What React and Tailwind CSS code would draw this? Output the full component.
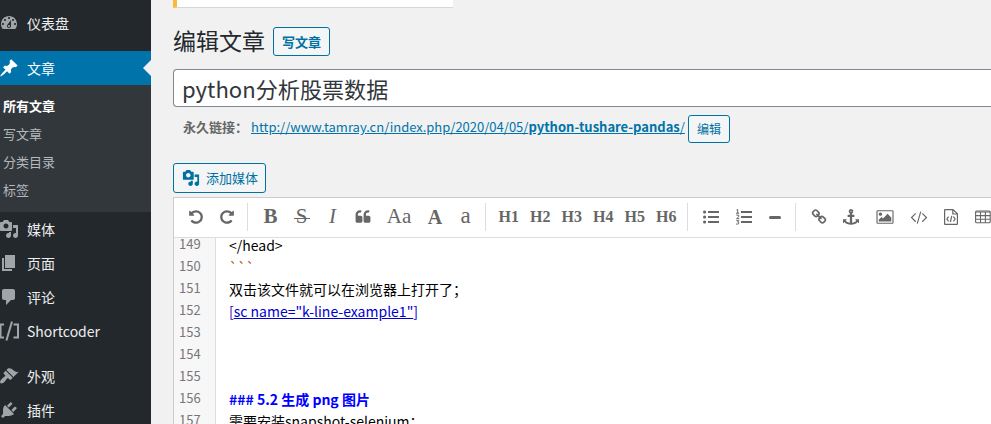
import React from "react";

const PATHS = {
  dashboard:
    "M3.76 16h12.48c1.1-1.37 1.76-3.11 1.76-5 0-4.42-3.58-8-8-8s-8 3.58-8 8c0 1.89.66 3.63 1.76 5zM10 4c.55 0 1 .45 1 1s-.45 1-1 1-1-.45-1-1 .45-1 1-1zM6 6c.55 0 1 .45 1 1s-.45 1-1 1-1-.45-1-1 .45-1 1-1zm8 0c.55 0 1 .45 1 1s-.45 1-1 1-1-.45-1-1 .45-1 1-1zm-5.37 5.55L12 7v6c0 1.1-.9 2-2 2s-2-.9-2-2c0-.57.24-1.08.63-1.45zM4 10c.55 0 1 .45 1 1s-.45 1-1 1-1-.45-1-1 .45-1 1-1zm12 0c.55 0 1 .45 1 1s-.45 1-1 1-1-.45-1-1 .45-1 1-1zm-5 3c0-.55-.45-1-1-1s-1 .45-1 1 .45 1 1 1 1-.45 1-1z",
  post: "M10.44 3.02l1.82-1.82 6.36 6.35-1.83 1.82c-1.05-.68-2.48-.57-3.41.36l-.75.75c-.92.93-1.04 2.35-.35 3.41l-1.83 1.82-2.41-2.41-2.8 2.79c-.42.42-3.38 2.71-3.8 2.29s1.86-3.39 2.28-3.81l2.79-2.79L4.1 9.36l1.83-1.82c1.05.69 2.48.57 3.4-.36l.75-.75c.93-.92 1.05-2.35.36-3.41z",
  media:
    "M13 11V4c0-.55-.45-1-1-1h-1.67L9 1H5L3.67 3H2c-.55 0-1 .45-1 1v7c0 .55.45 1 1 1h10c.55 0 1-.45 1-1zM7 4.5c1.38 0 2.5 1.12 2.5 2.5S8.38 9.5 7 9.5 4.5 8.38 4.5 7 5.62 4.5 7 4.5zM14 6h5v10.5c0 1.38-1.12 2.5-2.5 2.5S14 17.88 14 16.5s1.12-2.5 2.5-2.5c.17 0 .34.02.5.05V9h-3V6zm-4 8.05V13h2v3.5c0 1.38-1.12 2.5-2.5 2.5S7 17.88 7 16.5 8.12 14 9.5 14c.17 0 .34.02.5.05z",
  page: "M6 15V2h10v13H6zm-1 1h8v2H3V5h2v11z",
  comments:
    "M5 2h9c1.1 0 2 .9 2 2v7c0 1.1-.9 2-2 2h-2l-5 5v-5H5c-1.1 0-2-.9-2-2V4c0-1.1.9-2 2-2z",
  appearance:
    "M14.48 11.06L7.41 3.99l1.5-1.5c.5-.56 2.3-.47 3.51.32 1.21.8 1.43 1.28 2.91 2.1 1.18.64 2.45 1.26 4.45.85zm-.71.71L6.7 4.7 4.93 6.47c-.39.39-.39 1.02 0 1.41l1.06 1.06c.39.39.39 1.03 0 1.42-.6.6-1.43 1.11-2.21 1.69-.35.26-.7.53-1.01.84C1.43 14.23.4 16.08 1.4 17.07c.99 1 2.84-.03 4.18-1.36.31-.31.58-.66.85-1.02.57-.78 1.08-1.61 1.69-2.21.39-.39 1.02-.39 1.41 0l1.06 1.06c.39.39 1.02.39 1.41 0z",
  plugins:
    "M13.11 4.36L9.87 7.6 8 5.73l3.24-3.24c.35-.34 1.05-.2 1.56.32.52.51.66 1.21.31 1.55zm-8 1.77l.91-1.12 9.01 9.01-1.19.84c-.71.71-2.63 1.16-3.82 1.16H6.14L4.9 17.26c-.59.59-1.54.59-2.12 0-.59-.58-.59-1.53 0-2.12l1.24-1.24v-3.88c0-1.13.4-3.19 1.09-3.89zm7.26 3.97l3.24-3.24c.34-.35 1.04-.21 1.55.31.52.51.66 1.21.31 1.55l-3.24 3.25z",
  undo: "M1664 896q0 156-61 298t-164 245-245 164-298 61q-172 0-327-72.5t-264-204.5q-7-10-6.5-22.5t8.5-20.5l137-138q10-9 25-9 16 2 23 12 73 95 179 147t225 52q104 0 198.5-40.5t163.5-109.5 109.5-163.5 40.5-198.5-40.5-198.5-109.5-163.5-163.5-109.5-198.5-40.5q-98 0-188 35.5t-160 101.5l137 138q31 30 14 69-17 40-59 40h-448q-26 0-45-19t-19-45v-448q0-42 40-59 39-17 69 14l130 129q107-101 244.5-156.5t284.5-55.5q156 0 298 61t245 164 164 245 61 298z",
  quote:
    "M832 960v384q0 80-56 136t-136 56h-384q-80 0-136-56t-56-136v-704q0-104 40.5-198.5t109.5-163.5 163.5-109.5 198.5-40.5h64q26 0 45 19t19 45v128q0 26-19 45t-45 19h-64q-106 0-181 75t-75 181v32q0 40 28 68t68 28h224q80 0 136 56t56 136zm896 0v384q0 80-56 136t-136 56h-384q-80 0-136-56t-56-136v-704q0-104 40.5-198.5t109.5-163.5 163.5-109.5 198.5-40.5h64q26 0 45 19t19 45v128q0 26-19 45t-45 19h-64q-106 0-181 75t-75 181v32q0 40 28 68t68 28h224q80 0 136 56t56 136z",
  link: "M1520 1216q0-40-28-68l-208-208q-28-28-68-28-42 0-72 32 3 3 19 18.5t21.5 21.5 15 19 13 25.5 3.5 27.5q0 40-28 68t-68 28q-15 0-27.5-3.5t-25.5-13-19-15-21.5-21.5-18.5-19q-33 31-33 73 0 40 28 68l206 207q27 27 68 27 40 0 68-26l147-146q28-28 28-67zm-703-705q0-40-28-68l-206-207q-28-28-68-28-39 0-68 27l-147 146q-28 28-28 67 0 40 28 68l208 208q27 27 68 27 42 0 72-31-3-3-19-18.5t-21.5-21.5-15-19-13-25.5-3.5-27.5q0-40 28-68t68-28q15 0 27.5 3.5t25.5 13 19 15 21.5 21.5 18.5 19q33-31 33-73zm895 705q0 120-85 203l-147 146q-83 83-203 83-121 0-204-85l-206-207q-83-83-83-203 0-123 88-209l-88-88q-86 88-208 88-120 0-204-84l-208-208q-84-84-84-204t85-203l147-146q83-83 203-83 121 0 204 85l206 207q83 83 83 203 0 123-88 209l88 88q86-88 208-88 120 0 204 84l208 208q84 84 84 204z",
  anchor:
    "M960 256q0-26-19-45t-45-19-45 19-19 45 19 45 45 19 45-19 19-45zm832 928v352q0 22-20 30-8 2-12 2-12 0-23-9l-93-93q-119 143-318.5 226.5t-429.5 83.5-429.5-83.5-318.5-226.5l-93 93q-9 9-23 9-4 0-12-2-20-8-20-30v-352q0-14 9-23t23-9h352q22 0 30 20 8 19-7 35l-100 100q67 91 189.5 153.5t271.5 82.5v-647h-192q-26 0-45-19t-19-45v-128q0-26 19-45t45-19h192v-163q-58-34-93-92.5t-35-128.5q0-106 75-181t181-75 181 75 75 181q0 70-35 128.5t-93 92.5v163h192q26 0 45 19t19 45v128q0 26-19 45t-45 19h-192v647q149-20 271.5-82.5t189.5-153.5l-100-100q-15-16-7-35 8-20 30-20h352q14 0 23 9t9 23z",
  image:
    "M576 576q0 80-56 136t-136 56-136-56-56-136 56-136 136-56 136 56 56 136zm1024 384v448h-1408v-192l320-320 160 160 512-512zm96-704h-1600q-13 0-22.5 9.5t-9.5 22.5v1216q0 13 9.5 22.5t22.5 9.5h1600q13 0 22.5-9.5t9.5-22.5v-1216q0-13-9.5-22.5t-22.5-9.5zm160 32v1216q0 66-47 113t-113 47h-1600q-66 0-113-47t-47-113v-1216q0-66 47-113t113-47h1600q66 0 113 47t47 113z",
  code: "M553 1399l-50 50q-10 10-23 10t-23-10l-466-466q-10-10-10-23t10-23l466-466q10-10 23-10t23 10l50 50q10 10 10 23t-10 23l-393 393 393 393q10 10 10 23t-10 23zm591-1067l-373 1291q-4 13-15.5 19.5t-23.5 2.5l-62-17q-13-4-19.5-15.5t-2.5-24.5l373-1291q4-13 15.5-19.5t23.5-2.5l62 17q13 4 19.5 15.5t2.5 24.5zm657 651l-466 466q-10 10-23 10t-23-10l-50-50q-10-10-10-23t10-23l393-393-393-393q-10-10-10-23t10-23l50-50q10-10 23-10t23 10l466 466q10 10 10 23t-10 23z",
};

const Dash = ({ name, className = "size-5" }) => (
  <svg viewBox="0 0 20 20" fill="currentColor" className={`shrink-0 ${className}`}>
    <path d={PATHS[name]} />
  </svg>
);

const Fa = ({ name, className = "" }) => (
  <svg viewBox="0 0 1792 1792" fill="currentColor" className={`size-4 shrink-0 overflow-visible ${className}`}>
    <path d={PATHS[name]} />
  </svg>
);

const Brackets = () => (
  <svg viewBox="0 0 20 20" fill="none" stroke="currentColor" strokeWidth="2" className="size-5 shrink-0">
    <path d="M5 3.5H1.5v13H5M14.5 3.5H19v13h-4.5" />
    <path d="M13 .5 7.4 19.5" />
  </svg>
);

function MenuItem({ icon, label }) {
  return (
    <a className="flex h-[34px] items-center text-[#eee]">
      <span className="-ml-px mr-2 text-[#a0a5aa]">
        {icon === "brackets" ? <Brackets /> : <Dash name={icon} />}
      </span>
      <span className="text-[14px] leading-[18px]">{label}</span>
    </a>
  );
}

function Sidebar() {
  return (
    <nav className="w-[151px] shrink-0 overflow-hidden bg-[#23282d] pt-1.5">
      <MenuItem icon="dashboard" label="仪表盘" />
      <a className="mt-[11px] flex h-[34px] items-center bg-[#0073aa] text-white">
        <span className="-ml-px mr-2">
          <Dash name="post" />
        </span>
        <span className="grow text-[14px] leading-[18px]">文章</span>
        <span className="size-0 border-y-8 border-r-8 border-y-transparent border-r-[#f1f1f1]" />
      </a>
      <ul className="h-[127px] bg-[#32373c] pl-[3px] pt-[7px] text-[13px] leading-7 text-[#b4b9be]">
        <li className="font-bold text-white">所有文章</li>
        <li>写文章</li>
        <li>分类目录</li>
        <li>标签</li>
      </ul>
      <MenuItem icon="media" label="媒体" />
      <MenuItem icon="page" label="页面" />
      <MenuItem icon="comments" label="评论" />
      <MenuItem icon="brackets" label="Shortcoder" />
      <div className="h-[11px]" />
      <MenuItem icon="appearance" label="外观" />
      <MenuItem icon="plugins" label="插件" />
    </nav>
  );
}

const Divider = ({ className }) => <span className={`h-7 w-px shrink-0 bg-[#ddd] ${className}`} />;

const Glyph = ({ className = "", children }) => (
  <span className={`flex shrink-0 justify-center font-['Liberation_Serif',serif] ${className}`}>{children}</span>
);

function Toolbar() {
  return (
    <div className="flex h-10 items-center overflow-hidden border-b border-[#ddd] bg-white pb-px pl-3.5 text-[#666]">
      <Fa name="undo" />
      <Fa name="undo" className="ml-[15px] -scale-x-100" />
      <Divider className="ml-3" />
      <Glyph className="ml-[7px] w-[31px] text-[21px] font-bold">B</Glyph>
      <Glyph className="w-[31px] text-[21px]">
        <span className="flex w-4 justify-center bg-[linear-gradient(#666,#666)] bg-[length:100%_1px] bg-[position:0_55%] bg-no-repeat">
          S
        </span>
      </Glyph>
      <Glyph className="w-[31px] text-[21px] italic">I</Glyph>
      <Fa name="quote" className="ml-[7px]" />
      <Glyph className="ml-[9px] w-[38px] pb-px text-[21px]">Aa</Glyph>
      <Glyph className="w-[34px] text-[20px] font-bold">A</Glyph>
      <Glyph className="w-[27px] pb-px text-[23px]">a</Glyph>
      <Divider className="ml-1.5" />
      <div className="ml-[7px] flex">
        {["H1", "H2", "H3", "H4", "H5", "H6"].map((h) => (
          <Glyph key={h} className="w-[31.5px] text-[16px] font-bold">
            {h}
          </Glyph>
        ))}
      </div>
      <Divider className="ml-[5px]" />
      <svg viewBox="0 0 16 14" fill="currentColor" className="ml-[15px] h-3.5 w-4 shrink-0">
        <circle cx="1.6" cy="2" r="1.6" />
        <circle cx="1.6" cy="7" r="1.6" />
        <circle cx="1.6" cy="12" r="1.6" />
        <path d="M5 1h11v2H5zM5 6h11v2H5zM5 11h11v2H5z" />
      </svg>
      <svg viewBox="0 0 16 16" className="ml-[17px] size-4 shrink-0" fill="none" stroke="currentColor">
        <path strokeWidth="2" d="M5 3h11M5 8h11M5 13h11" />
        <path d="M.5 1 1.7.5v3.7M0 4.2h3.2M.3 6.1h2.4v1.7L.5 9.7h2.8M.3 11.7h2.6l-1.3 1.4q1.5 0 1.3 1.2-.5 1.3-2.8.7" />
      </svg>
      <span className="ml-[17px] h-[3px] w-3 shrink-0 rounded-xs bg-[#666]" />
      <Divider className="ml-[14px]" />
      <Fa name="link" className="ml-[15px]" />
      <Fa name="anchor" className="ml-4" />
      <Fa name="image" className="ml-[18px]" />
      <Fa name="code" className="ml-[18px]" />
      <svg viewBox="0 0 14 16" fill="none" stroke="currentColor" strokeWidth="1.2" className="ml-[17px] h-4 w-3.5 shrink-0">
        <path d="M.6 1.1Q.6.6 1.1.6H9l4.4 4.2v10.1q0 .5-.5.5H1.1q-.5 0-.5-.5zM8.8.6V5h4.6" />
        <path d="M4.6 7.6 2.9 10l1.7 2.4M9.4 7.6l1.7 2.4-1.7 2.4M7.8 6.8l-1.4 6.2" />
      </svg>
      <svg viewBox="0 0 16 14" fill="none" stroke="currentColor" strokeWidth="1.1" className="ml-[17px] h-3.5 w-4 shrink-0">
        <rect x=".6" y="1" width="14.6" height="11.8" rx="1" />
        <path d="M.6 2h14.6M.6 5.6h14.6M.6 9.2h14.6M5.5 2v10.8M10.4 2v10.8" />
      </svg>
    </div>
  );
}

const LINES = [
  { n: 149, text: "</head>" },
  { n: 150, text: "```", style: "text-[#a50]" },
  { n: 151, text: "双击该文件就可以在浏览器上打开了；" },
  { n: 152, link: true },
  { n: 153, text: "" },
  { n: 154, text: "" },
  { n: 155, text: "" },
  { n: 156, text: "### 5.2 生成 png 图片", style: "font-bold text-[#00f]" },
  { n: 157, text: "需要安装snapshot-selenium：" },
];

function Editor() {
  return (
    <div className="grow overflow-hidden border-l border-t border-[#ccc] bg-white">
      <Toolbar />
      <div className="-mt-1 h-[198px] [clip-path:inset(4px_0_0_0)]">
        {LINES.map((l) => (
          <div key={l.n} className="flex h-[22px] text-[14px] leading-[22px] whitespace-nowrap">
            <span className="w-[42px] shrink-0 border-r border-[#ddd] bg-[#f7f7f7] pl-[5px] text-[13px] leading-[20px] text-[#777]">
              {l.n}
            </span>
            <span className={`pl-[13px] ${l.style || "text-black"}`}>
              {l.link ? (
                <>
                  <span className="text-[#30a]">[</span>
                  <span className="text-[#00c] underline">sc name="k-line-example1"</span>
                  <span className="text-[#00c]">]</span>
                </>
              ) : (
                l.text
              )}
            </span>
          </div>
        ))}
      </div>
    </div>
  );
}

export default function App() {
  return (
    <div className="flex h-[424px] w-[991px] overflow-hidden bg-[#f1f1f1] font-['Noto_Sans_CJK_SC',sans-serif] text-[13px]">
      <Sidebar />
      <main className="flex min-w-0 grow flex-col pl-[22px]">
        <div className="h-2 w-[280px] shrink-0 border-b border-l-4 border-b-[#d5d7d9] border-l-[#ffb93a] bg-white" />
        <div className="mt-[19px] flex h-[29px] shrink-0 items-center">
          <h1 className="pb-0.5 text-[23px] leading-[29px] text-[#23282d]">编辑文章</h1>
          <a className="ml-2 flex h-[29px] w-[57px] items-center justify-center rounded-[3px] border border-[#0071a1] bg-[#f3f5f6] font-bold text-[#0071a1]">
            写文章
          </a>
        </div>
        <div className="mt-[13px] flex h-[38px] shrink-0 items-center rounded-l-[4px] border border-r-0 border-[#7e8993] bg-white pl-2 pt-0.5 text-[22.1px] text-[#32373c]">
          python分析股票数据
        </div>
        <div className="mt-2 flex h-7 shrink-0 items-center whitespace-nowrap pl-2.5">
          <strong className="pb-1 text-[#666]">永久链接：</strong>
          <a className="ml-[3px] pb-1 text-[#0073aa] underline">
            http://www.tamray.cn/index.php/2020/04/05/<b>python-tushare-pandas</b>/
          </a>
          <a className="ml-[3px] flex h-7 w-[42px] items-center justify-center rounded-[3px] border border-[#0071a1] bg-[#f3f5f6] text-[12px] text-[#0071a1]">
            编辑
          </a>
        </div>
        <a className="mt-5 flex h-[30px] w-[93px] shrink-0 items-center rounded-[3px] border border-[#0071a1] bg-[#f3f5f6] pl-2 text-[#0071a1]">
          <Dash name="media" className="mr-1.5 size-[18px]" />
          添加媒体
        </a>
        <div className="mt-1 flex min-h-0 grow">
          <Editor />
        </div>
      </main>
    </div>
  );
}
